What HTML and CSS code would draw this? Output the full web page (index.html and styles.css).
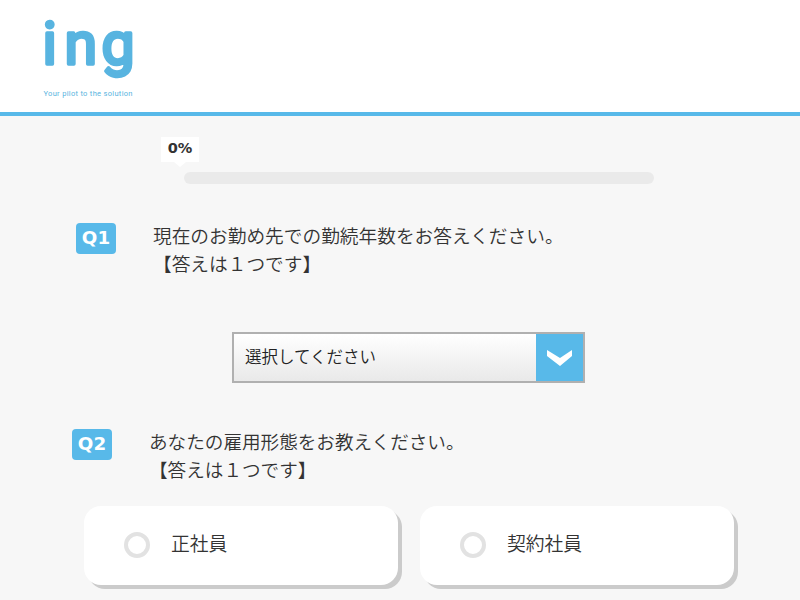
FILE: index.html
```html
<!DOCTYPE html>
<html lang="ja">
<head>
<meta charset="utf-8">
<title>ing</title>
<link rel="stylesheet" href="styles.css">
</head>
<body>
<header class="header">
  <svg class="logo" width="110" height="90" viewBox="0 0 110 90">
    <g class="logo-name">
      <text x="2.5" y="52.5">i</text>
      <text x="24.5" y="52.5">n</text>
      <text x="61.5" y="52.5">g</text>
    </g>
    <text class="logo-tagline" x="3.5" y="84.5" textLength="89">Your pilot to the solution</text>
  </svg>
</header>
<main>
  <div class="progress">
    <div class="progress-label">0%</div>
    <div class="progress-bar"></div>
  </div>
  <section class="question first">
    <span class="badge">Q1</span>
    <p class="question-text">現在のお勤め先での勤続年数をお答えください。<br>【答えは１つです】</p>
  </section>
  <div class="select">
    <span class="select-value">選択してください</span>
    <span class="select-arrow"><svg width="26" height="18" viewBox="0 0 26 18"><path d="M0 1L13 9L25 1V7L13 17L0 7Z" fill="#fff"/></svg></span>
  </div>
  <section class="question second">
    <span class="badge">Q2</span>
    <p class="question-text">あなたの雇用形態をお教えください。<br>【答えは１つです】</p>
  </section>
  <div class="options">
    <div class="option"><span class="radio"></span><span class="option-text">正社員</span></div>
    <div class="option"><span class="radio"></span><span class="option-text">契約社員</span></div>
  </div>
</main>
</body>
</html>
```
FILE: styles.css
```css
* { box-sizing: border-box; }
body {
  margin: 0;
  height: 600px;
  overflow: hidden;
  background: #f7f7f7;
  color: #333;
  font-family: "Noto Sans CJK JP", sans-serif;
  font-weight: 350;
}
.header {
  height: 116px;
  padding: 11px 0 0 40px;
  background: #fff;
  border-bottom: 4px solid #58b9e9;
}
.logo { display: block; overflow: visible; fill: #58b4e0; }
.logo-name {
  font: 400 59px Roboto, sans-serif;
  stroke: #58b4e0;
  stroke-width: 3.5;
  stroke-linejoin: round;
}
.logo-tagline { font: 400 7.5px Roboto, sans-serif; }
.progress { padding: 21px 0 0 161px; height: 107px; }
.progress-label {
  position: relative;
  width: 38px;
  height: 25px;
  background: #fff;
  color: #333;
  font: 700 14.5px/22px "DejaVu Sans", sans-serif;
  text-align: center;
}
.progress-label::after {
  content: "";
  position: absolute;
  left: 13px;
  top: 25px;
  border: 6px solid transparent;
  border-top: 5px solid #fff;
  border-bottom: 0;
}
.progress-bar {
  width: 470px;
  height: 12px;
  margin: 10px 0 0 23px;
  border-radius: 6px;
  background: #eaeaea;
}
.question { display: flex; align-items: flex-start; }
.first { padding-left: 76px; height: 109px; }
.second { padding-left: 72px; height: 77px; margin-top: 46px; }
.badge {
  width: 40px;
  height: 31px;
  border-radius: 4px;
  background: #58b9e9;
  color: #fff;
  font: 700 18.3px/30px "DejaVu Sans", sans-serif;
  text-align: center;
}
.question-text {
  margin: -2px 0 0 37px;
  font-size: 18.7px;
  line-height: 28px;
}
.second .question-text { font-size: 18.6px; }
.select {
  display: flex;
  width: 353px;
  height: 51px;
  margin-left: 232px;
  border: 2px solid #b0b0b0;
  background: linear-gradient(#fff, #e9e9e9);
}
.select-value {
  flex: 1;
  padding-left: 11px;
  color: #222;
  font-size: 16.5px;
  line-height: 44px;
}
.select-arrow {
  display: flex;
  width: 47px;
  align-items: center;
  justify-content: center;
  background: #58b9e9;
}
.options { display: flex; gap: 22px; padding-left: 84px; }
.option {
  display: flex;
  align-items: center;
  width: 314px;
  height: 79px;
  padding-left: 40px;
  border-radius: 17px;
  background: #fff;
  box-shadow: 4px 4px 0 #cbcbcb;
  font-size: 18.8px;
  line-height: 28px;
}
.option-text { margin-bottom: 6px; }
.radio {
  width: 26px;
  height: 26px;
  margin: 0 21px 2px 0;
  border: 4px solid #e2e2e2;
  border-radius: 50%;
}
```
